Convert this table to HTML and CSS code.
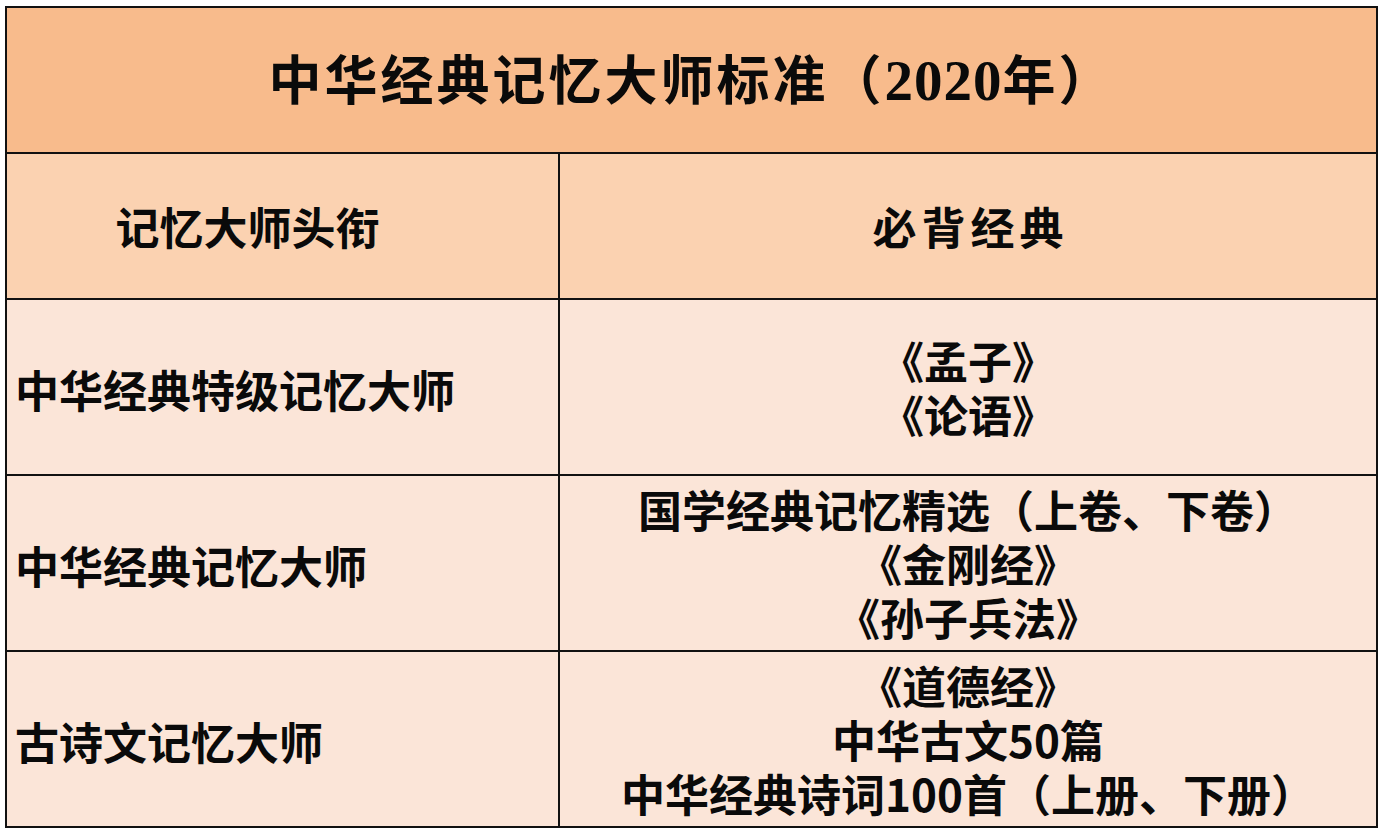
FILE: index.html
```html
<!DOCTYPE html>
<html lang="zh-CN">
<head>
<meta charset="utf-8">
<title>中华经典记忆大师标准（2020年）</title>
<link rel="stylesheet" href="styles.css">
</head>
<body>
<div class="wrap">
<table class="std">
  <colgroup>
    <col class="col-left">
    <col class="col-right">
  </colgroup>
  <tr class="title-row">
    <th colspan="2" class="title">中华经典记忆大师标准（<span class="num">2020</span>年）</th>
  </tr>
  <tr class="head-row">
    <th class="head head-left">记忆大师头衔</th>
    <th class="head head-right">必背经典</th>
  </tr>
  <tr class="body-row">
    <td class="name">中华经典特级记忆大师</td>
    <td class="books">《孟子》<br>《论语》</td>
  </tr>
  <tr class="body-row">
    <td class="name">中华经典记忆大师</td>
    <td class="books">国学经典记忆精选（上卷、下卷）<br>《金刚经》<br>《孙子兵法》</td>
  </tr>
  <tr class="body-row">
    <td class="name">古诗文记忆大师</td>
    <td class="books">《道德经》<br>中华古文50篇<br>中华经典诗词100首（上册、下册）</td>
  </tr>
</table>
</div>
</body>
</html>
```

FILE: styles.css
```css
html, body {
  margin: 0;
  padding: 0;
  background: #ffffff;
}

body {
  font-family: "Noto Sans CJK SC", "Noto Sans", sans-serif;
  color: #0a0a0a;
}

.wrap {
  padding: 6px 0 0 5px;
}

.std {
  border-collapse: collapse;
  width: 1373px;
  table-layout: fixed;
}

.col-left {
  width: 553px;
}

.std th,
.std td {
  border: 2px solid #111111;
  padding: 0;
  font-weight: 600;
}

.title-row {
  height: 146px;
}

.title {
  background: #f8bb8c;
  font-size: 53px;
  letter-spacing: 3px;
  text-align: center;
  line-height: 1;
}

.num {
  font-family: "Liberation Serif", serif;
  font-weight: 700;
  font-size: 57px;
  letter-spacing: 1px;
}

.head-row {
  height: 146px;
}

.head {
  background: #fbd2b1;
  font-size: 44px;
  line-height: 1;
  text-align: center;
}

.head-left {
  padding-right: 70px !important;
}

.head-right {
  letter-spacing: 5px;
  padding-left: 5px !important;
}

.body-row {
  height: 176px;
}

.body-row td {
  background: #fbe5d8;
  font-size: 44px;
  line-height: 54px;
  vertical-align: middle;
}

.name {
  text-align: left;
  padding-left: 8px !important;
  padding-top: 4px !important;
}

.books {
  text-align: center;
  padding-top: 0;
}
```
